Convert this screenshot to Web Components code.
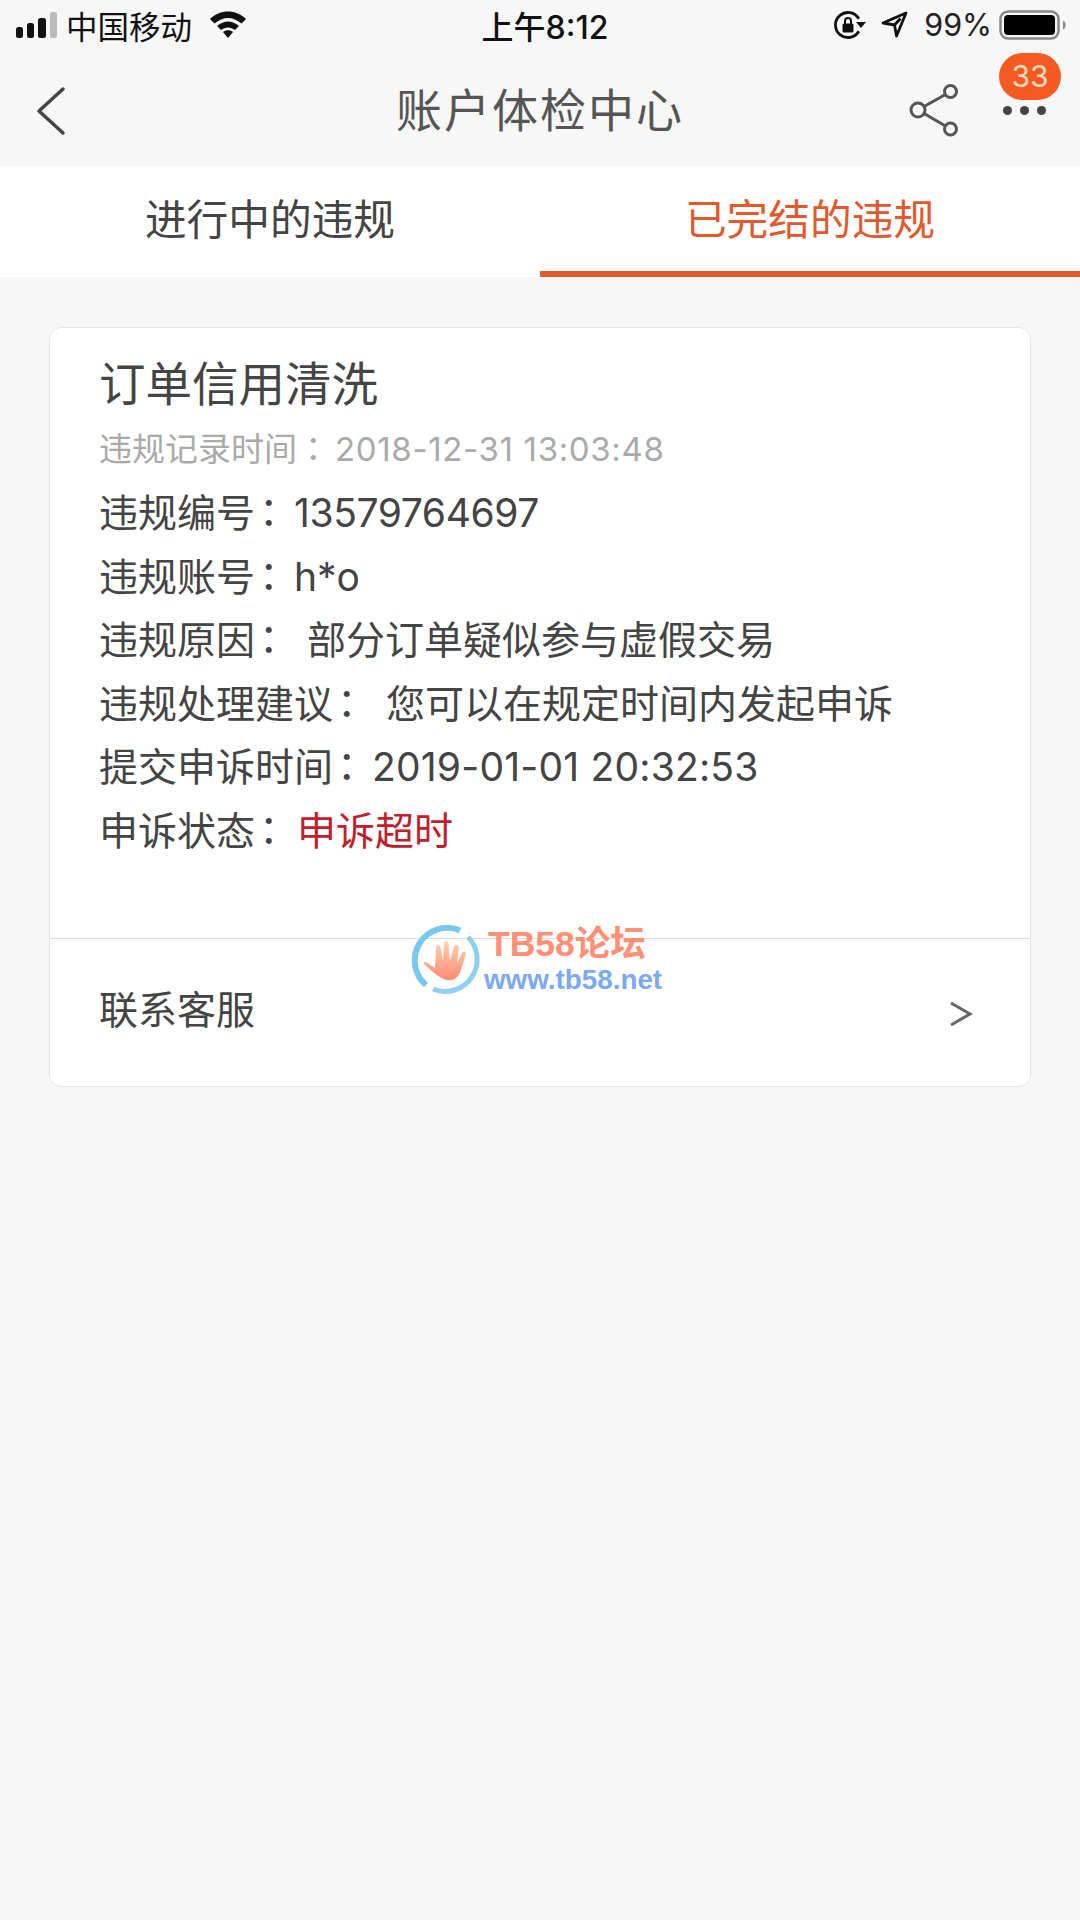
<!DOCTYPE html>
<html lang="zh">
<head>
<meta charset="utf-8">
<title>账户体检中心</title>
<style>
html, body { margin: 0; padding: 0; background: #f7f7f7; }
body { width: 1080px; min-height: 1920px; font-family: Inter, "Noto Sans CJK SC", sans-serif; color: #444; }
</style>
</head>
<body>
<status-bar></status-bar>
<nav-header title="账户体检中心" badge="33"></nav-header>
<tab-bar>
    <tab-item>进行中的违规</tab-item>
    <tab-item active>已完结的违规</tab-item>
</tab-bar>
<violation-card heading="订单信用清洗" recorded="违规记录时间" stamp="2018-12-31 13:03:48">
    <info-row label="违规编号" gap="0" track="-0.4">13579764697</info-row>
    <info-row label="违规账号" gap="0">h*o</info-row>
    <info-row label="违规原因" gap="13">部分订单疑似参与虚假交易</info-row>
    <info-row label="违规处理建议" gap="14">您可以在规定时间内发起申诉</info-row>
    <info-row label="提交申诉时间" gap="0" track="0.2">2019-01-01 20:32:53</info-row>
    <info-row label="申诉状态" gap="3" tone="alert">申诉超时</info-row>
</violation-card>
<script>
class StatusBar extends HTMLElement {
    constructor() {
        super();
        this.attachShadow({ mode: 'open' });
        this.shadowRoot.innerHTML = `
        <style>
        :host { display: grid; grid-template-columns: 1fr auto 1fr; align-items: center; box-sizing: border-box; height: 55px; padding: 0 13px 6px 16px; color: #111; }
        .left, .right { display: flex; align-items: center; }
        .right { justify-content: flex-end; }
        .carrier { font-size: 31.500px; margin: 0 18px 0 9px; }
        .time { font-size: 32px; font-weight: 500; padding-left: 7px; }
        .pct { font-size: 30.500px; margin: 0 7px 0 16px; color: #222; }
        svg { display: block; overflow: visible; }
        </style>
        <div class="left">
            <svg width="41" height="26" viewBox="0 0 41 26">
                <rect x="0" y="15" width="7" height="11" rx="2.500" fill="#111"/>
                <rect x="11" y="11" width="7" height="15" rx="2.500" fill="#111"/>
                <rect x="22" y="6" width="8" height="20" rx="2.500" fill="#111"/>
                <rect x="34" y="0" width="7" height="26" rx="2" fill="#bbb"/>
            </svg>
            <span class="carrier">中国移动</span>
            <svg width="36" height="27" viewBox="0 0 36 27">
                <path d="M0 8 C10 -2 26 -2 36 8 L31.500 12.500 C23 5 13 5 4.500 12.500 Z" fill="#111"/>
                <path d="M7 15 C14 9 22 9 29 15 L25 19 C20.500 15.500 15.500 15.500 11 19 Z" fill="#111"/>
                <path d="M13 21 C16 18.800 20 18.800 23 21 L18 27 Z" fill="#111"/>
            </svg>
        </div>
        <span class="time">上午8:12</span>
        <div class="right">
            <svg width="32" height="28" viewBox="0 0 32 28">
                <path d="M24.800 7.800 A12.500 12.500 0 1 0 24.800 20.200" fill="none" stroke="#111" stroke-width="2.800"/>
                <path d="M22 11 L32 11 L27 17 Z" fill="#111"/>
                <rect x="8.500" y="12.500" width="11" height="9" rx="1.500" fill="#111"/>
                <path d="M11 13 V10 A3 3 0 0 1 17 10 V13" fill="none" stroke="#111" stroke-width="2"/>
            </svg>
            <svg style="margin-left:15px" width="27" height="27" viewBox="0 0 27 27">
                <path d="M25 2 L2 12 L13.500 14 L15.500 25 Z M19.500 7.500 L13.500 14" fill="none" stroke="#111" stroke-width="2.800" stroke-linejoin="round"/>
            </svg>
            <span class="pct">99%</span>
            <svg width="68" height="30" viewBox="0 0 68 30">
                <rect x="1.500" y="1.500" width="58" height="27" rx="7.500" fill="none" stroke="#888" stroke-width="2.500"/>
                <rect x="5" y="5" width="51" height="20" rx="4" fill="#000"/>
                <path d="M64 10.500 C67.500 12 67.500 18 64 19.500 Z" fill="#888"/>
            </svg>
        </div>
        `;
    }
}
customElements.define('status-bar', StatusBar);

class NavHeader extends HTMLElement {
    constructor() {
        super();
        this.attachShadow({ mode: 'open' });
        this.shadowRoot.innerHTML = `
        <style>
        :host { display: flex; align-items: center; justify-content: space-between; height: 111px; padding: 0 34px 0 36px; }
        .title { position: absolute; left: 0; width: 1080px; padding-bottom: 7px; text-align: center; font-size: 46px; letter-spacing: 2px; color: #555; pointer-events: none; }
        .actions { display: flex; align-items: center; gap: 42px; }
        .share { margin-bottom: 2px; }
        .more { position: relative; display: flex; gap: 8px; }
        .more i { width: 9px; height: 9px; border-radius: 50%; background: #444; }
        .badge { position: absolute; left: -4px; top: -53px; width: 62px; height: 47px; border-radius: 24px; background: #f55a22; color: #ffdcc0; font-size: 30px; line-height: 47px; text-align: center; }
        svg { display: block; }
        </style>
        <svg width="30" height="50" viewBox="0 0 30 50"><path d="M27 3 L3 25 L27 47" fill="none" stroke="#444" stroke-width="3.500" stroke-linecap="round" stroke-linejoin="round"/></svg>
        <span class="title"></span>
        <div class="actions">
            <svg class="share" width="52" height="54" viewBox="0 0 52 54">
                <g fill="none" stroke="#555" stroke-width="3">
                    <circle cx="9" cy="27" r="7"/><circle cx="41.500" cy="8.500" r="6"/><circle cx="41.500" cy="46" r="6"/>
                    <path d="M15 23.500 L36.500 11.500 M15 30.500 L36.500 43"/>
                </g>
            </svg>
            <div class="more"><i></i><i></i><i></i><span class="badge"></span></div>
        </div>
        `;
        this.shadowRoot.querySelector('.title').textContent = this.getAttribute('title');
        this.shadowRoot.querySelector('.badge').textContent = this.getAttribute('badge');
    }
}
customElements.define('nav-header', NavHeader);

class TabBar extends HTMLElement {
    constructor() {
        super();
        this.attachShadow({ mode: 'open' });
        this.shadowRoot.innerHTML = `
        <style>
        :host { display: grid; grid-template-columns: 1fr 1fr; height: 111px; background: #fff; }
        </style>
        <slot></slot>
        `;
    }
}
customElements.define('tab-bar', TabBar);

class TabItem extends HTMLElement {
    constructor() {
        super();
        this.attachShadow({ mode: 'open' });
        this.shadowRoot.innerHTML = `
        <style>
        :host { display: flex; align-items: center; justify-content: center; box-sizing: border-box; font-size: 41.700px; color: #444; padding-bottom: 4px; border-bottom: 6px solid transparent; }
        :host([active]) { color: #e2592e; border-bottom-color: #e2592e; }
        </style>
        <slot></slot>
        `;
    }
}
customElements.define('tab-item', TabItem);

class ViolationCard extends HTMLElement {
    constructor() {
        super();
        this.attachShadow({ mode: 'open' });
        this.shadowRoot.innerHTML = `
        <style>
        :host { display: block; position: relative; margin: 50px 49px 0; background: #fff; border: 1px solid #e6e6e6; border-radius: 12px; }
        .body { height: 610px; padding: 25px 49px 0; box-sizing: border-box; }
        h2 { margin: 0; font-size: 46.500px; font-weight: 400; line-height: 62px; color: #444; }
        .meta { margin: 6.500px 0 5.500px; font-size: 33px; line-height: 50px; color: #aaa; white-space: nowrap; }
        .meta .colon { display: inline-block; box-sizing: border-box; width: 33px; padding-left: 8px; font-family: "Noto Sans CJK TC", sans-serif; font-feature-settings: "palt"; }
        .meta b { font-weight: 400; margin-left: 5px; letter-spacing: 0.650px; }
        .foot { display: flex; align-items: center; justify-content: space-between; box-sizing: border-box; height: 148px; padding: 0 58px 11px 49px; border-top: 1px solid #ddd; font-size: 39px; color: #444; }
        .foot svg { margin-top: 14px; }
        svg { display: block; overflow: visible; }
        .mark { position: absolute; left: 363px; top: 599px; width: 256px; height: 74px; }
        .mark .ring { position: absolute; left: 0; top: 0; }
        .mark .cn { position: absolute; left: 75px; top: -3px; font: 700 35.500px/40px "Liberation Sans", "Noto Sans CJK SC", sans-serif; color: #ff8f75; white-space: nowrap; }
        .mark .url { position: absolute; left: 71px; top: 38px; font: 700 27.800px/30px "Liberation Sans", sans-serif; color: #7aa9f5; white-space: nowrap; }
        </style>
        <div class="body">
            <h2></h2>
            <div class="meta"><span class="rec"></span><span class="colon">：</span><b class="stamp"></b></div>
            <slot></slot>
        </div>
        <div class="foot">
            <span>联系客服</span>
            <svg width="22" height="26" viewBox="0 0 22 26"><path d="M1 2 L20 13 L1 24" fill="none" stroke="#666" stroke-width="3"/></svg>
        </div>
        <div class="mark">
            <svg class="ring" width="68" height="66" viewBox="0 0 68 66">
                <defs>
                    <linearGradient id="palm" x1="0" y1="0" x2="0" y2="1">
                        <stop offset="0" stop-color="#ffd2b4"/>
                        <stop offset="1" stop-color="#ff8a72"/>
                    </linearGradient>
                </defs>
                <path d="M47 3.500 A32.500 32.500 0 0 0 13 58" fill="none" stroke="#79c8ef" stroke-width="6"/>
                <path d="M55 10 A32 32 0 0 1 20 62" fill="none" stroke="#8fd0f2" stroke-width="5"/>
                <path d="M13 35 L22 41 L23 20 Q25 16 27.500 20 L30 34 L31 16 Q33 12 35.500 16 L37 34 L41 19 Q44 16 46 20 L44 36 L49 26 Q52 23 53 27 L47 46 Q42 55 33 53 Q24 50 11 37 Q11 34 13 35 Z" fill="url(#palm)"/>
            </svg>
            <span class="cn">TB58论坛</span>
            <span class="url">www.tb58.net</span>
        </div>
        `;
        this.shadowRoot.querySelector('h2').textContent = this.getAttribute('heading');
        this.shadowRoot.querySelector('.rec').textContent = this.getAttribute('recorded');
        this.shadowRoot.querySelector('.stamp').textContent = this.getAttribute('stamp');
    }
}
customElements.define('violation-card', ViolationCard);

class InfoRow extends HTMLElement {
    constructor() {
        super();
        this.attachShadow({ mode: 'open' });
        this.shadowRoot.innerHTML = `
        <style>
        :host { display: flex; height: 63.500px; line-height: 63.500px; align-items: baseline; font-size: 39px; color: #444; white-space: nowrap; }
        :host([tone="alert"]) .val { color: #c0202a; }
        .colon { box-sizing: border-box; width: 39px; padding-left: 4px; font-family: "Noto Sans CJK TC", sans-serif; font-feature-settings: "palt"; }
        </style>
        <span class="lab"></span><span class="colon">：</span><span class="val"><slot></slot></span>
        `;
        this.shadowRoot.querySelector('.lab').textContent = this.getAttribute('label');
        let val = this.shadowRoot.querySelector('.val');
        val.style.marginLeft = this.getAttribute('gap') + 'px';
        if (this.hasAttribute('track')) val.style.letterSpacing = this.getAttribute('track') + 'px';
    }
}
customElements.define('info-row', InfoRow);
</script>
</body>
</html>
